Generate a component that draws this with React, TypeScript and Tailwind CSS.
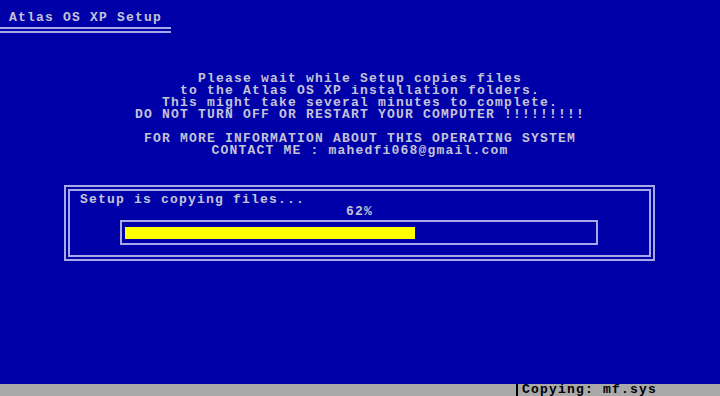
import React from 'react';

const App = () => {
  const percent = 62;

  return (
    <div className="w-[720px] h-[396px] bg-[#0000a8] flex flex-col overflow-hidden font-['Liberation_Mono',monospace] font-bold text-[13px] tracking-[1.2px] leading-[12px] text-[#c4c4d8]">
      {/* Title */}
      <div className="pt-[12px] pl-[9px] whitespace-pre">Atlas OS XP Setup</div>
      <div className="mt-[3px] w-[171px] h-[6px] border-y-2 border-[#a8a8e8]" />

      {/* Message */}
      <div className="mt-[40px] text-center whitespace-pre">
        <div>Please wait while Setup copies files</div>
        <div>to the Atlas OS XP installation folders.</div>
        <div>This might take several minutes to complete.</div>
        <div>DO NOT TURN OFF OR RESTART YOUR COMPUTER !!!!!!!!!</div>
        <div className="mt-[12px]">FOR MORE INFORMATION ABOUT THIS OPERATING SYSTEM</div>
        <div>CONTACT ME : mahedfi068@gmail.com</div>
      </div>

      {/* Progress box */}
      <div className="mt-[28px] ml-[64px] w-[591px] border-2 border-[#a8a8e8] p-[2px]">
        <div className="border-2 border-[#a8a8e8] pt-[3px] pb-[10px]">
          <div className="pl-[10px] whitespace-pre">Setup is copying files...</div>
          <div className="text-center whitespace-pre">{percent}%</div>
          <div className="mt-[2px] ml-[50px] w-[478px] h-[25px] border-2 border-[#a8a8e8] pl-[3px] pr-[3px] pt-[5px]">
            <div className="h-[12px] bg-[#ffff00]" style={{ width: `${percent}%` }} />
          </div>
        </div>
      </div>

      <div className="flex-1" />

      {/* Status bar */}
      <div className="h-[12px] bg-[#a8a8a8] flex text-black">
        <div className="ml-[516px] w-[2px] h-full bg-black" />
        <div className="pl-[4px] whitespace-pre">Copying: mf.sys</div>
      </div>
    </div>
  );
};

export default App;
